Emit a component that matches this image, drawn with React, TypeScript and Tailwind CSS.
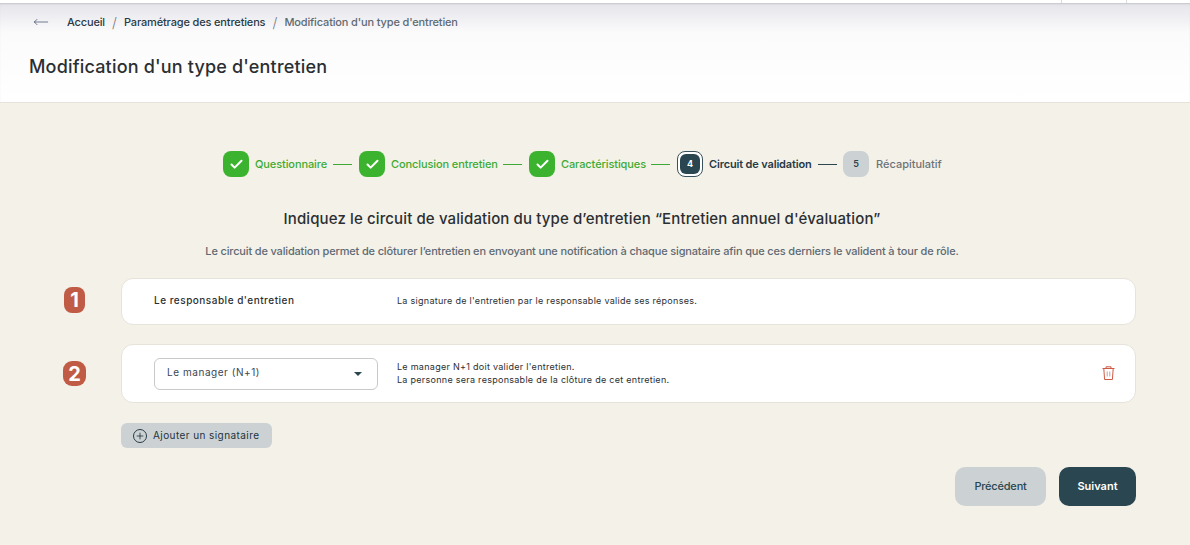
import React from "react";
import { Check, MoveLeft, Plus } from "lucide-react";

const font = { fontFamily: '"Inter", "Liberation Sans", sans-serif' };

function Done({ label, w }: { label: string; w: string }) {
  return (
    <>
      <div className="w-[26px] h-[26px] shrink-0 rounded-[8px] bg-[#3cb32f] flex items-center justify-center">
        <Check size={15} strokeWidth={3.25} className="text-white" />
      </div>
      <span className={`ml-[6px] text-[11px] font-medium text-[#3dab33] tracking-[-0.1px] whitespace-nowrap ${w}`}>{label}</span>
      <div className="ml-[6px] mr-[7px] w-[19px] h-px bg-[#3dab33]" />
    </>
  );
}

export default function App() {
  return (
    <div className="w-[1190px] h-[545px] overflow-hidden bg-[#f4f1e9] flex flex-col text-[#2a3a45]" style={font}>
      <div className="h-[3px] bg-white flex justify-end">
        <div className="w-[66px] mr-[63px] border-x border-[#dddbd5]" />
      </div>
      <header className="h-[100px] bg-gradient-to-b from-[#e4e4ea] via-[#fbfbfc] via-[30%] to-white border-b border-[#e6e3db] shadow-[inset_0_2px_2px_-1px_#c4c4ca]">
        <nav className="h-[38px] flex items-center text-[11px] font-medium tracking-[-0.15px]">
          <MoveLeft size={16} strokeWidth={1} className="ml-[33px] text-[#2d3f5e]" />
          <span className="ml-[18px]">Accueil</span>
          <span className="w-[19px] text-center text-[14px] font-light text-[#777]">/</span>
          <span>Paramétrage des entretiens</span>
          <span className="w-[19px] text-center text-[14px] font-light text-[#777]">/</span>
          <span className="text-[#5f6a72]">Modification d'un type d'entretien</span>
        </nav>
        <h1 className="ml-[29px] mt-[14px] text-[18px] leading-[24px] font-medium text-[#2b2f33] tracking-[0.18px]">Modification d'un type d'entretien</h1>
      </header>

      <main className="flex-1 flex flex-col">
        <div className="mt-[48px] pl-[223px] flex items-center h-[26px]">
          <Done label="Questionnaire" w="w-[72px]" />
          <Done label="Conclusion entretien" w="w-[106px]" />
          <Done label="Caractéristiques" w="w-[84px]" />
          <div className="w-[26px] h-[26px] shrink-0 rounded-[8px] border border-[#3a525c] bg-white flex items-center justify-center">
            <div className="w-[20px] h-[20px] rounded-[6px] bg-[#2a4650] flex items-center justify-center text-[9px] font-bold text-white">4</div>
          </div>
          <span className="ml-[6px] w-[103px] text-[11px] font-semibold text-[#263a46] tracking-[-0.15px] whitespace-nowrap">Circuit de validation</span>
          <div className="ml-[6px] mr-[6px] w-[19px] h-px bg-[#2a4650]" />
          <div className="w-[26px] h-[26px] shrink-0 rounded-[8px] bg-[#ccd2d4] flex items-center justify-center text-[9px] font-semibold text-[#2a4650]">5</div>
          <span className="ml-[7px] text-[11px] font-medium text-[#6d7377]">Récapitulatif</span>
        </div>

        <h2 className="mt-[32px] pr-[26px] text-center text-[15px] leading-[20px] font-medium text-[#2b2f33] tracking-[0.12px]">Indiquez le circuit de validation du type d’entretien “Entretien annuel d'évaluation”</h2>
        <p className="mt-[15px] pr-[26px] text-center text-[11px] leading-[14px] font-medium text-[#5f6a72] tracking-[-0.16px]">Le circuit de validation permet de clôturer l’entretien en envoyant une notification à chaque signataire afin que ces derniers le valident à tour de rôle.</p>

        <div className="mt-[20px] flex">
          <div className="ml-[64px] mt-[9px] w-[21px] h-[26px] rounded-[8px] bg-[#c05c45] flex items-center justify-center text-[20px] font-bold text-white">1</div>
          <div className="ml-[36px] w-[1015px] h-[47px] bg-white border border-[#e7e3da] rounded-[12px] flex items-center pl-[32px] pb-[2px]">
            <span className="w-[243px] text-[10px] font-medium text-[#2b2f33] tracking-[0.5px]">Le responsable d'entretien</span>
            <span className="text-[9px] text-[#2b2f33] tracking-[0.28px]">La signature de l'entretien par le responsable valide ses réponses.</span>
          </div>
        </div>

        <div className="mt-[19px] flex">
          <div className="ml-[63px] mt-[17px] w-[23px] h-[25px] rounded-[9px] bg-[#c05c45] flex items-center justify-center text-[20px] font-bold text-white">2</div>
          <div className="ml-[35px] w-[1015px] h-[59px] bg-white border border-[#e7e3da] rounded-[12px] flex items-center pl-[32px]">
            <div className="w-[224px] h-[32px] rounded-[6px] border border-[#c9c9c9] flex items-center justify-between pl-[12px] pr-[15px]">
              <span className="mb-[2px] text-[10px] font-normal text-[#3a4650] tracking-[0.55px]">Le manager (N+1)</span>
              <span className="w-0 h-0 border-x-[4px] border-x-transparent border-t-[4px] border-t-[#2a4650]" />
            </div>
            <div className="ml-[19px] mb-[2px] text-[9px] leading-[13px] text-[#2b2f33] tracking-[0.28px]">
              <div>Le manager N+1 doit valider l'entretien.</div>
              <div>La personne sera responsable de la clôture de cet entretien.</div>
            </div>
            <svg width="13" height="14" viewBox="0 0 13 14" fill="none" stroke="#cf5a44" strokeWidth="1" className="ml-auto mr-[20px] mb-[2px]">
              <path d="M0.5 2.5H12.5M4 2.5V0.8H9V2.5M1.8 2.5L2.6 13.5H10.4L11.2 2.5" />
              <path d="M5.2 5.5V10.5M7.8 5.5V10.5" stroke="#b9a0a8" />
            </svg>
          </div>
        </div>

        <button className="mt-[20px] ml-[121px] w-[151px] h-[25px] rounded-[6px] bg-[#ccd2d4] flex items-center pl-[12px] gap-[6px] text-[10px] font-normal text-[#22333d] tracking-[0.42px]">
          <span className="w-[14px] h-[14px] rounded-full border border-[#263a46] flex items-center justify-center"><Plus size={10} strokeWidth={2} /></span>
          Ajouter un signataire
        </button>

        <div className="mt-[19px] ml-[955px] flex gap-[13px]">
          <button className="w-[91px] h-[39px] rounded-[10px] bg-[#ccd2d4] text-[11px] font-medium text-[#2a4650] tracking-[-0.2px]">Précédent</button>
          <button className="w-[77px] h-[39px] rounded-[10px] bg-[#2a4650] text-[11px] font-semibold text-white">Suivant</button>
        </div>
      </main>
    </div>
  );
}
